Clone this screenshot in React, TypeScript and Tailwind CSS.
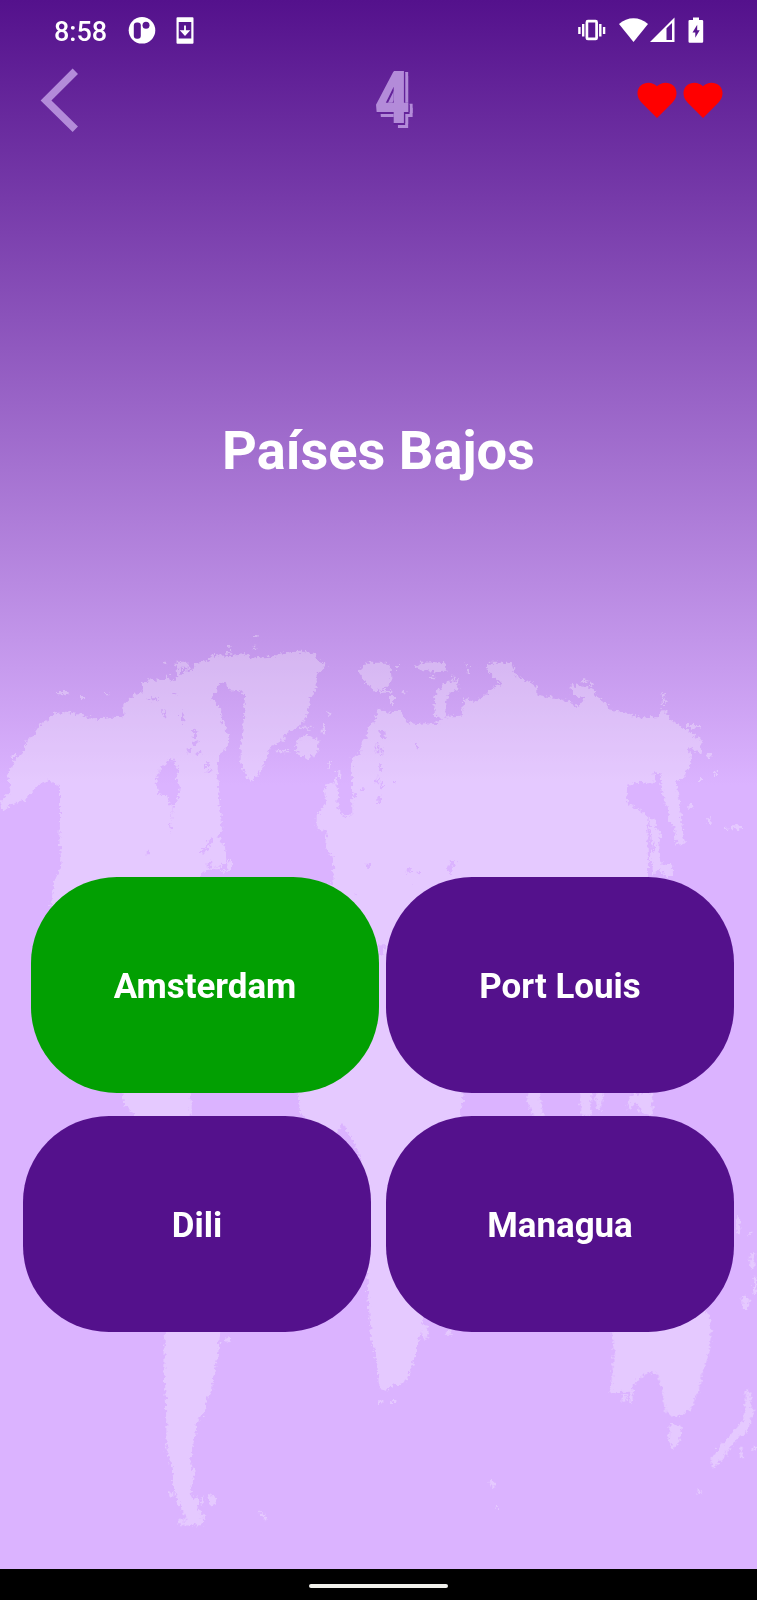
import React from "react";

const answers = [
  { label: "Amsterdam", className: "ml-2 bg-[#029f02]" },
  { label: "Port Louis", className: "ml-[7px] bg-[#54118c]" },
  { label: "Dili", className: "bg-[#54118c]" },
  { label: "Managua", className: "ml-[7px] bg-[#54118c]" },
];

function WorldMap() {
  return (
    <svg className="pointer-events-none absolute inset-0" width="757" height="1569" viewBox="0 0 757 1569" aria-hidden="true">
      <defs>
        <filter id="coast" filterUnits="userSpaceOnUse" x="0" y="600" width="757" height="969">
          <feTurbulence type="fractalNoise" baseFrequency="0.3" numOctaves="2" seed="4" />
          <feDisplacementMap in="SourceGraphic" scale="8" xChannelSelector="R" yChannelSelector="G" />
        </filter>
      </defs>
      <g opacity="0.3" fill="#fff" filter="url(#coast)">
        {/* North America and Greenland */}
        <g transform="translate(0 620) scale(.33333)">
          <path fillRule="evenodd" d="M0 545L35 510 20 465 45 420 75 390 80 360 105 345 115 315 145 300 165 280 200 275 245 285 285 298 330 290 370 292 370 255 400 225 430 220 425 190 450 178 490 180 500 160 512 185 532 175 530 145 580 150 585 130 620 122 640 105 690 108 735 103 770 115 820 108 870 96 910 95 940 100 955 120 980 132 965 150 950 160 950 200 932 235 920 290 890 325 860 340 835 370 810 380 798 420 775 465 755 485 735 465 722 420 722 370 732 300 735 225 715 210 695 215 675 187 652 195 652 215 632 230 660 265 668 310 685 350 683 385 655 405 652 470 658 550 667 620 655 650 675 680 680 730 600 760 600 900 150 860 165 780 185 735 178 660 180 600 180 500 150 480 120 490 75 540 30 555 10 572ZM512 410L500 430 480 440 478 465 467 470 472 500 480 525 500 525 515 560 514 610 506 610 512 640 518 560 535 530 540 500 530 480 535 450ZM490 265L500 292 490 292ZM543 265L555 300 543 310ZM580 325L594 345 585 355 578 345ZM575 365h18v10h-18zM563 385h10v14h-10zM590 395h14v8h-14zM615 430h14v8h-14zM620 450h14v8h-14zM440 235h34v6h-34zM520 218h12v6h-12zM440 692h10v14h-10zM595 690h16v8h-16zM615 700L640 660 635 650 610 690ZM620 725h14v20h-14zM640 740h20v8h-20zM540 150h9v14h-9zM563 140h9v16h-9z" />
          <path d="M890 360L920 345 955 360 955 400 920 418 888 395ZM170 216h36v7h-36zM318 219h10v7h-10zM680 75h12v8h-12zM675 93h16v8h-16zM755 80h14v8h-14zM765 43h8v10h-8zM490 125h9v8h-9zM530 125h35v18h-35zM982 278h9v9h-9zM895 320h40v6h-40zM35 402h12v12h-12zM240 228h9v9h-9zM985 425h8v18h-8zM1012 453h9v22h-9zM1004 480h8v12h-8zM845 350h12v12h-12zM830 390h40v7h-40zM968 310h7v30h-7zM685 720h8v30h-8zM660 750h30v5h-30z" />
          <path d="M975 500L1000 485 1015 510 1012 550 1030 595 1060 590 1080 630 1040 700 1020 770 1000 760 998 710 975 680 980 635 950 625 950 585 978 550Z" />
        </g>
        {/* Europe, Asia and the Arctic islands */}
        <g transform="translate(300 630) scale(.33333)">
          <path fillRule="evenodd" d="M100 760L105 640 125 560 157 555 155 385 180 370 183 340 200 320 203 290 225 270 238 235 262 250 300 240 320 275 350 282 375 280 400 282 445 260 485 257 490 205 520 215 550 200 580 170 605 165 580 140 560 120 562 98 635 98 645 135 690 155 712 170 712 195 770 205 810 215 835 235 850 205 815 190 815 165 880 175 890 200 920 220 925 238 990 250 1000 262 1070 262 1088 240 1105 245 1105 270 1140 285 1180 315 1205 330 1202 372 1165 350 1175 395 1160 420 1155 440 1128 450 1140 520 1145 590 1155 640 1130 645 1125 595 1105 570 1100 530 1085 480 1082 430 1060 425 1065 462 1015 455 985 465 980 520 1020 540 1042 560 1046 900 0 960 0 760ZM235 300h18v8h-18zM246 308h8v16h-8zM230 340h8v30h-8zM240 355h7v20h-7zM238 400h8v22h-8zM230 440h8v20h-8zM242 455h7v20h-7zM232 500h14v22h-14zM180 475h14v7h-14zM163 490h8v12h-8zM348 340h6v12h-6zM278 450h10v7h-10zM455 688L466 700 448 730 440 722ZM320 718h16v10h-16zM312 745h9v26h-9zM330 762h30v8h-30zM350 725h10v8h-10zM200 700h10v16h-10zM215 740h8v30h-8zM240 770h8v18h-8zM165 770h10v26h-10z" />
          <path d="M1046 560L1065 570 1070 600 1085 610 1075 650 1085 700 1120 705 1118 738 1095 738 1080 715 1055 735 1060 700 1046 690 1060 660Z" />
          <path d="M175 125L195 98 262 98 272 110 275 155 260 170 225 185 200 160ZM345 110L360 98 432 96 437 122 370 125ZM402 200L430 160 475 150 475 180 450 188 436 215 437 270 405 260ZM1085 190h12v12h-12zM1085 210h12v12h-12zM270 195h12v30h-12zM288 108h9v9h-9zM500 120h7v10h-7zM500 102h7v8h-7zM1155 285h50v8h-50zM1220 372h14v10h-14zM1242 425h9v10h-9zM1165 525h18v12h-18zM1220 565h12v14h-12zM1272 590h10v10h-10zM1290 586h33v12h-33zM845 148h14v9h-14zM870 158h10v9h-10zM1200 444h9v9h-9zM455 140h9v9h-9zM240 180h34v8h-34zM390 137h16v8h-16zM308 185h8v8h-8z" />
        </g>
        {/* Mediterranean coast and Africa */}
        <path fillRule="evenodd" d="M334 875H510V1000L470 1070 464 1090 460 1125 430 1230 423 1310 422 1325 418 1346 413 1363 406 1382 393 1386 384 1392 379 1385 377 1360 371 1340 368 1290 366 1200 358 1150 343 1124 330 1140 300 1112 298 1090 310 1040 360 970 360 930 334 890ZM381 906L385 915 389 926 386 945 382 956 378 950 374 932ZM353 885L356 896 349 890ZM362 896h3v12h-3zM371 889h3v6h-3zM412 877L419 882 408 886Z" />
        {/* South America */}
        <g transform="translate(0 1070) scale(.33333)">
          <path d="M360 40L572 40 572 140 650 250 665 740 655 850 640 920 635 970 618 980 615 1030 592 1050 583 1110 570 1165 583 1210 572 1270 595 1310 610 1365 550 1367 560 1345 535 1300 522 1250 515 1190 500 1140 498 1000 493 900 495 750 400 300 400 130 370 100ZM622 1280L635 1272 650 1285 645 1300 635 1308 625 1300ZM778 1325L795 1330 800 1350 788 1345ZM535 1345L558 1350 540 1370ZM675 803h18v12h-18zM505 1265h18v14h-18zM585 1280h10v30h-10zM602 1280h9v24h-9zM598 1335h20v9h-20z" />
        </g>
        {/* South-east Asia, Australia and New Zealand */}
        <g transform="translate(370 1070) scale(.33333)">
          <path d="M470 60L512 60 510 90 522 140 490 140 475 100ZM630 60L665 60 662 140 635 140ZM675 65L702 65 690 125 680 110ZM780 75L845 65 850 140 815 130 800 100 770 120ZM725 780L1000 720 1020 735 1023 790 1018 850 1000 900 985 965 960 1020 920 1043 890 1030 875 960 862 912 840 905 810 925 785 950 750 970 722 970 732 850ZM755 955h35v10h-35zM758 975h10v20h-10zM778 970h10v26h-10zM900 1058L933 1065 930 1110 910 1138 895 1110ZM1130 955L1142 970 1142 1005 1153 1020 1130 1090 1105 1100 1060 1165 1025 1197 1025 1165 1050 1130 1095 1080 1120 1050ZM1098 440L1112 445 1110 490 1098 490ZM1140 550L1155 550 1153 600 1140 590ZM1115 680L1138 680 1135 720 1120 720ZM1137 485h10v12h-10zM1150 620h9v50h-9zM358 1232L375 1235 372 1250 362 1250ZM983 1260h9v12h-9zM377 1308h8v8h-8zM1110 1130h8v35h-8zM1148 1130h9v12h-9zM150 760L175 765 170 810 155 800ZM228 780h14v14h-14zM25 990h12v9h-12zM62 990h14v9h-14z" />
        </g>
      </g>
    </svg>
  );
}

function StatusBar() {
  return (
    <div className="flex h-[60px] items-center justify-between pr-[53px] pl-[54px]">
      <div className="flex items-center">
        <span className="w-[53px] pt-1 text-[27px] leading-none font-medium text-white">8:58</span>
        <svg className="ml-[21px]" width="28" height="28" viewBox="0 0 28 28">
          <circle cx="14" cy="14.300" r="13.300" fill="#fff" />
          <rect x="5.800" y="6.400" width="7" height="16.400" rx="3" fill="#5a1791" />
          <circle cx="18" cy="9.300" r="3.500" fill="#5a1791" />
        </svg>
        <svg className="ml-5" width="18" height="28" viewBox="0 0 18 28">
          <path fillRule="evenodd" fill="#fff" d="M1.500 1.200h15a1 1 0 0 1 1 1v24.600a1 1 0 0 1-1 1h-15a1 1 0 0 1-1-1V2.200a1 1 0 0 1 1-1ZM2.700 6v16.600h12.600V6Z" />
          <path d="M9 9.500v8M5.800 15.200l3.200 3.400 3.200-3.400Z" stroke="#fff" strokeWidth="1.800" fill="#fff" />
        </svg>
      </div>
      <div className="flex items-center">
        <svg width="28" height="28" viewBox="0 0 28 28" fill="none" stroke="#fff" strokeWidth="2.400">
          <rect x="8.900" y="5.200" width="9.700" height="17.700" rx="1" strokeWidth="2.700" />
          <path d="M5.200 8v12.500M1.400 11v7M22.300 8v12.500M26.100 11v7" />
        </svg>
        <svg className="ml-[13px]" width="29" height="28" viewBox="0 0 29 28">
          <path fill="#fff" d="M0 8C8.500 .3 20.500 .3 29 8L14.500 26Z" />
        </svg>
        <svg className="ml-[2px]" width="25" height="28" viewBox="0 0 25 28">
          <path fillRule="evenodd" fill="#fff" d="M0 26L24.500 1.500V26ZM16.500 12.300V24H22V6.900Z" />
        </svg>
        <svg className="ml-[13px]" width="16" height="28" viewBox="0 0 16 28">
          <path fillRule="evenodd" fill="#fff" d="M5 1.600h6v2.300h3q1.200 0 1.200 1.200v20.500q0 1.200-1.200 1.200H1.700Q.5 26.800.5 25.600V5.100q0-1.200 1.200-1.200H5ZM9.200 8.800L4.500 16.500H7.300V21.800L11.700 14.300H9.200Z" />
        </svg>
      </div>
    </div>
  );
}

function Heart() {
  return (
    <svg width="40" height="37" viewBox="0 0 40 37" aria-hidden="true">
      <path fill="#f00" d="M20 36L4.500 20.500C-1 15-.5 7.500 3.800 3.600 8.400-.5 15.500-.2 20 4.200 24.500-.2 31.600-.5 36.200 3.600 40.500 7.500 41 15 35.500 20.500Z" />
    </svg>
  );
}

function Header() {
  return (
    <div className="grid h-20 grid-cols-3 items-center">
      <svg className="ml-10" width="40" height="66" viewBox="0 0 40 66" aria-label="Volver">
        <path d="M35.300 4.200L6 33.500 35.300 62.300" fill="none" stroke="#b38bd9" strokeWidth="7.600" />
      </svg>
      <span className="-mt-[3px] ml-[28px] block scale-x-[.86] text-center text-[72px] leading-[80px] font-black text-[#b38bd9] [text-shadow:1.5px_1.500px_0_#63229a,1.5px_0_0_#63229a,0_1.500px_0_#63229a,5px_5px_0_#b38bd9,5px_1px_0_#b38bd9]">
        4
      </span>
      <div className="flex justify-end gap-[6px] pr-[34px]">
        <Heart />
        <Heart />
      </div>
    </div>
  );
}

export default function App() {
  return (
    <div className="flex h-[1600px] w-[757px] flex-col overflow-hidden bg-black font-[Roboto,sans-serif]">
      <main className="relative h-[1569px] overflow-hidden bg-[linear-gradient(#54118c_0px,#dbb3ff_785px)]">
        <WorldMap />
        <div className="relative flex h-full flex-col">
          <StatusBar />
          <Header />
          <div className="flex h-[737px] items-start justify-center pt-[278px]">
            <h1 className="text-[54.200px] leading-[66px] font-bold text-white">Países Bajos</h1>
          </div>
          <div className="grid grid-cols-[356px_356px] gap-y-[23px] pl-[23px]">
            {answers.map((a) => (
              <button
                key={a.label}
                className={`h-[216px] w-[348px] rounded-[86px] pt-1 text-[34.900px] font-bold text-white ${a.className}`}
              >
                {a.label}
              </button>
            ))}
          </div>
        </div>
      </main>
      <div className="flex h-[31px] items-center justify-center pt-[3px]">
        <div className="h-1 w-[139px] rounded-full bg-[#f1f1ec]" />
      </div>
    </div>
  );
}
